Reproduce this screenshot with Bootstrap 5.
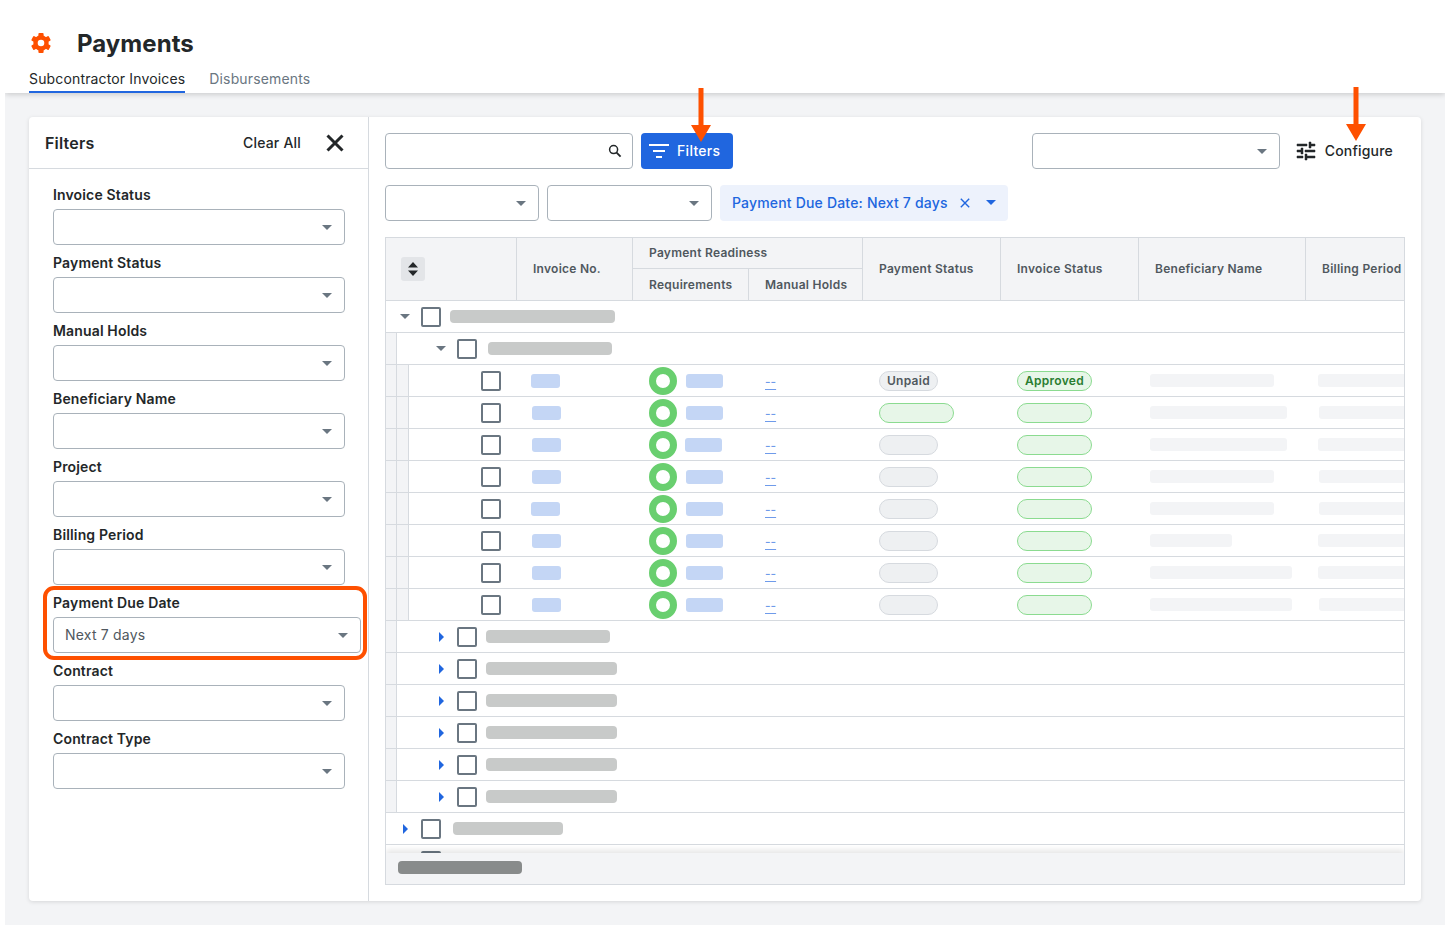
<!DOCTYPE html>
<html lang="en">
<head>
<meta charset="utf-8">
<title>Payments</title>
<link href="https://cdn.jsdelivr.net/npm/bootstrap@5.3.0/dist/css/bootstrap.min.css" rel="stylesheet">
<style>
:root{--ink:#232729;--line:#d6dadf;--orange:#fe5000;--blue:#2066df;--shell:#f3f4f6}
html,body{height:930px;overflow:hidden}
body{background:#fff;font-family:Inter,"Liberation Sans",sans-serif;color:var(--ink);font-size:14px;position:relative}
.shell{margin:0 5px;height:925px;background:var(--shell);display:flex;flex-direction:column;overflow:hidden}
.page-head{height:93px;background:#fff;box-shadow:0 1px 6px rgba(0,0,0,.2);padding:0 24px;position:relative;flex:none}
.title-row{height:69px;padding-top:27px;gap:24px}
.page-title{font-size:24px;font-weight:700;line-height:34px;margin:0;color:var(--ink);letter-spacing:.05px}
.gear{width:24px;height:24px;color:var(--orange);flex:none}
.tab-row{gap:24px;height:24px}
.tab-item{font-size:14px;line-height:20px;letter-spacing:.15px;color:#6a7681;text-decoration:none;height:24px}
.tab-item.on{color:var(--ink);border-bottom:2px solid var(--blue)}
.main-wrap{padding:24px;flex:1;min-height:0}
.work-card{height:784px;border:0;border-radius:4px;box-shadow:0 1px 4px rgba(0,0,0,.12);background:#fff;display:flex;flex-direction:row;overflow:hidden}
.filter-pane{width:340px;flex:none;border-right:1px solid var(--line)}
.filter-top{height:52px;border-bottom:1px solid var(--line);padding:0 23px 0 16px}
.filter-name{font-size:16px;font-weight:600;letter-spacing:.2px}
.clear-all{font-size:14px;font-weight:500;letter-spacing:.2px;color:var(--ink);margin-right:24px}
.close-x{width:20px;height:20px;display:block}
.filter-body{padding:14px 23px 0 24px}
.field-box{height:68px;position:relative}
.field-label{font-size:14px;font-weight:600;line-height:24px;height:26px;margin:0;letter-spacing:.15px;color:var(--ink);display:block}
.sel-box.form-select{height:36px;min-height:36px;border:1px solid #a9b2ba;border-radius:4px;font-size:14px;letter-spacing:.2px;color:#50585e;padding:0 30px 2px 11px;font-family:inherit;background-size:10px 5px;background-position:right 12px center;background-image:url("data:image/svg+xml,%3csvg xmlns='http://www.w3.org/2000/svg' viewBox='0 0 10 5'%3e%3cpath fill='%236a7681' d='M0 0h10L5 5z'/%3e%3c/svg%3e")}
.due-field .sel-box.form-select{width:308px;max-width:none}
.due-ring{position:absolute;left:-10px;top:-5px;width:324px;height:74px;border:4px solid var(--orange);border-radius:11px;pointer-events:none}
.grid-pane{flex:1;min-width:0;padding:16px;display:flex;flex-direction:column}
.tool-one{gap:8px;height:36px;margin-bottom:16px}
.tool-two{gap:8px;height:36px;margin-bottom:16px}
.search-box{width:248px;height:36px;position:relative;flex:none}
.search-box .form-control{height:36px;border:1px solid #a9b2ba;border-radius:4px}
.search-ico{position:absolute;right:11px;top:11px;width:14px;height:14px}
.filter-btn.btn{width:92px;height:36px;background:var(--blue);border:0;border-radius:4px;font-size:14px;font-weight:500;letter-spacing:.3px;color:#fff;padding:0 0 1px 8px;gap:8px;display:flex;align-items:center;justify-content:flex-start}
.w-a{width:248px;flex:none;margin-left:auto}
.w-b{width:154px;flex:none}
.w-c{width:165px;flex:none}
.config-btn{margin-left:6px;margin-right:12px;gap:7px;font-weight:500;font-size:14px;letter-spacing:.2px;color:var(--ink);padding-bottom:1px}
.filter-chip{height:36px;width:288px;background:#edf2fc;border-radius:4px;color:var(--blue);font-weight:500;font-size:14px;letter-spacing:.18px;padding:0 12px 1px;gap:12px;flex:none;white-space:nowrap}
.grid-frame{height:648px;border:1px solid var(--line);display:flex;flex-direction:column;overflow:hidden;flex:none}
.grid-scroll{flex:1;min-height:0;overflow:hidden}
.pay-table.table{width:1140px;table-layout:fixed;border-collapse:separate;border-spacing:0;margin:0}
.pay-table.table>:not(caption)>*>*{padding:0;border-bottom:1px solid var(--line);border-right:0;background:#fff;box-shadow:none;height:32px;vertical-align:middle;color:var(--ink)}
.pay-table.table>thead>*>*{background:var(--shell);font-size:12px;font-weight:600;letter-spacing:.26px;color:#50585e;border-right:1px solid var(--line);padding-left:16px;height:32px;white-space:nowrap}
.pay-table.table>thead>tr:first-child>*{height:31px}
.pay-table.table>thead>*>*.sort-head{padding-left:15px}
.sort-chip{width:24px;height:24px;background:#e3e5e8;border-radius:3px;display:flex;align-items:center;justify-content:center}
.tree-cell{height:31px;display:flex;align-items:center}
.strip{width:11px;height:31px;flex:none;background:var(--shell);border-right:1px solid var(--line)}
.strip.two{width:12px}
.tw{display:flex;align-items:center;flex:none}
.tick{width:20px;height:20px;border:2px solid #6a7681;border-radius:2px;flex:none;background:#fff}
.gbar{height:13px;background:#c8cac9;border-radius:4px;flex:none}
.ibar{height:14px;background:#c4d6f5;border-radius:3px;display:block}
.ring{width:28px;height:28px;border:7px solid #69cf6f;border-radius:50%;flex:none}
.flex-mid{display:flex;align-items:center;height:31px}
.dash-link{color:#6f9bea;font-size:12px;line-height:14px;text-decoration:underline;text-decoration-thickness:1px;text-underline-offset:3px;font-weight:500;display:block;white-space:nowrap;margin-top:2px}
.pill{height:20px;border-radius:10px;border:1px solid;font-size:12px;font-weight:600;letter-spacing:.3px;line-height:18px;display:block;text-align:center;padding:0}
.pill.grey{width:59px;background:#eef0f2;border-color:#d6dadf;color:#50585e}
.pill.green{width:75px;background:#e7f6e8;border-color:#8bdb90;color:#2a7d31}
.soft{height:13px;background:var(--shell);border-radius:3px;display:block}
.scroll-foot{height:31px;flex:none;background:var(--shell);position:relative;box-shadow:0 -3px 6px rgba(0,0,0,.1);padding:8px 12px}
.scroll-thumb{width:124px;height:13px;background:#888b8b;border-radius:4px}
.note-arrow{position:absolute;width:20px;height:54px;color:var(--orange)}
.arrow-a{left:691px;top:88px}
.arrow-b{left:1346px;top:87px}
</style>
</head>
<body>
<div class="shell">
  <header class="page-head">
    <div class="title-row d-flex align-items-start">
      <svg class="gear mt-1" viewBox="0 0 24 24" aria-hidden="true"><g fill="currentColor"><rect x="9.4" y="2" width="5.2" height="5" rx="1"/><rect x="9.4" y="2" width="5.2" height="5" rx="1" transform="rotate(60 12 12)"/><rect x="9.4" y="2" width="5.2" height="5" rx="1" transform="rotate(120 12 12)"/><rect x="9.4" y="2" width="5.2" height="5" rx="1" transform="rotate(180 12 12)"/><rect x="9.4" y="2" width="5.2" height="5" rx="1" transform="rotate(240 12 12)"/><rect x="9.4" y="2" width="5.2" height="5" rx="1" transform="rotate(300 12 12)"/></g><circle cx="12" cy="12" r="5.5" fill="none" stroke="currentColor" stroke-width="4.4"/></svg>
      <h1 class="page-title">Payments</h1>
    </div>
    <nav class="tab-row d-flex">
      <a class="tab-item on" href="#">Subcontractor Invoices</a>
      <a class="tab-item" href="#">Disbursements</a>
    </nav>
  </header>
  <main class="main-wrap">
    <div class="card work-card">
      <aside class="filter-pane">
        <div class="filter-top d-flex align-items-center">
          <span class="filter-name me-auto">Filters</span>
          <span class="clear-all">Clear All</span>
          <svg class="close-x" viewBox="0 0 20 20" aria-hidden="true"><path d="M2.5 2.5l15 15M17.5 2.5l-15 15" stroke="#232729" stroke-width="3" fill="none"/></svg>
        </div>
        <div class="filter-body">
          <div class="field-box"><label class="field-label">Invoice Status</label><select class="form-select sel-box"><option></option></select></div>
          <div class="field-box"><label class="field-label">Payment Status</label><select class="form-select sel-box"><option></option></select></div>
          <div class="field-box"><label class="field-label">Manual Holds</label><select class="form-select sel-box"><option></option></select></div>
          <div class="field-box"><label class="field-label">Beneficiary Name</label><select class="form-select sel-box"><option></option></select></div>
          <div class="field-box"><label class="field-label">Project</label><select class="form-select sel-box"><option></option></select></div>
          <div class="field-box"><label class="field-label">Billing Period</label><select class="form-select sel-box"><option></option></select></div>
          <div class="field-box due-field"><label class="field-label">Payment Due Date</label><select class="form-select sel-box"><option>Next 7 days</option></select><div class="due-ring"></div></div>
          <div class="field-box"><label class="field-label">Contract</label><select class="form-select sel-box"><option></option></select></div>
          <div class="field-box"><label class="field-label">Contract Type</label><select class="form-select sel-box"><option></option></select></div>
        </div>
      </aside>
      <section class="grid-pane">
        <div class="tool-one d-flex align-items-center">
          <div class="search-box">
            <input class="form-control" type="text" aria-label="Search">
            <svg class="search-ico" viewBox="0 0 14 14" aria-hidden="true"><circle cx="5.6" cy="5.6" r="4" fill="none" stroke="#232729" stroke-width="1.5"/><path d="M8.6 8.6l4 4" stroke="#232729" stroke-width="1.8"/></svg>
          </div>
          <button class="btn filter-btn" type="button">
            <svg width="20" height="14" viewBox="0 0 20 14" aria-hidden="true"><path d="M0 0h20v2H0zM4 6h12v2H4zM7 12h6v2H7z" fill="#fff"/></svg>
            <span>Filters</span>
          </button>
          <select class="form-select sel-box w-a" aria-label="View"><option></option></select>
          <div class="config-btn d-flex align-items-center">
            <svg width="24" height="24" viewBox="0 0 24 24" aria-hidden="true"><path fill="#232729" stroke="#232729" stroke-width=".5" d="M3 17v2h6v-2H3zM3 5v2h10V5H3zm10 16v-2h8v-2h-8v-2h-2v6h2zM7 9v2H3v2h4v2h2V9H7zm14 4v-2H11v2h10zm-6-4h2V7h4V5h-4V3h-2v6z"/></svg>
            <span>Configure</span>
          </div>
        </div>
        <div class="tool-two d-flex align-items-center">
          <select class="form-select sel-box w-b" aria-label="Filter one"><option></option></select>
          <select class="form-select sel-box w-c" aria-label="Filter two"><option></option></select>
          <div class="filter-chip d-flex align-items-center">
            <span>Payment Due Date: Next 7 days</span>
            <svg width="10" height="10" viewBox="0 0 10 10" aria-hidden="true"><path d="M.8.8l8.4 8.4M9.2.8L.8 9.2" stroke="#2066df" stroke-width="1.4"/></svg>
            <svg class="ms-1" width="10" height="5" viewBox="0 0 10 5" aria-hidden="true"><path d="M0 0h10L5 5z" fill="#2066df"/></svg>
          </div>
        </div>
        <div class="grid-frame">
          <div class="grid-scroll">
            <table class="table pay-table">
              <colgroup><col style="width:131px"><col style="width:116px"><col style="width:116px"><col style="width:114px"><col style="width:138px"><col style="width:138px"><col style="width:167px"><col style="width:220px"></colgroup>
              <thead>
                <tr>
                  <th rowspan="2" class="sort-head"><div class="sort-chip"><svg width="10" height="14" viewBox="0 0 10 14" aria-hidden="true"><path d="M5 0l5 5.5H0zM5 14L0 8.5h10z" fill="#232729"/></svg></div></th>
                  <th rowspan="2">Invoice No.</th>
                  <th colspan="2">Payment Readiness</th>
                  <th rowspan="2">Payment Status</th>
                  <th rowspan="2">Invoice Status</th>
                  <th rowspan="2">Beneficiary Name</th>
                  <th rowspan="2">Billing Period</th>
                </tr>
                <tr><th>Requirements</th><th>Manual Holds</th></tr>
              </thead>
              <tbody>
                <tr><td colspan="8"><div class="tree-cell"><span class="tw" style="margin-left:14px;width:21px"><svg width="10" height="5" viewBox="0 0 10 5"><path d="M0 0h10L5 5z" fill="#6a7681"/></svg></span><span class="tick"></span><span class="gbar" style="margin-left:9px;width:165px"></span></div></td></tr>
                <tr><td colspan="8"><div class="tree-cell"><span class="strip"></span><span class="tw" style="margin-left:39px;width:21px"><svg width="10" height="5" viewBox="0 0 10 5"><path d="M0 0h10L5 5z" fill="#6a7681"/></svg></span><span class="tick"></span><span class="gbar" style="margin-left:11px;width:124px"></span></div></td></tr>

                <tr><td><div class="tree-cell"><span class="strip"></span><span class="strip two"></span><span class="tick" style="margin-left:72px"></span></div></td><td><div class="flex-mid"><span class="ibar" style="margin-left:14px;width:29px"></span></div></td><td><div class="flex-mid"><span class="ring" style="margin-left:16px"></span><span class="ibar" style="margin-left:9px;width:37px"></span></div></td><td><div class="flex-mid"><a class="dash-link" style="margin-left:16px" href="#">--</a></div></td><td><div class="flex-mid"><span class="pill grey" style="margin-left:16px">Unpaid</span></div></td><td><div class="flex-mid"><span class="pill green" style="margin-left:16px">Approved</span></div></td><td><div class="flex-mid"><span class="soft" style="margin-left:11px;width:124px"></span></div></td><td><div class="flex-mid"><span class="soft" style="margin-left:12px;width:130px"></span></div></td></tr>

                <tr><td><div class="tree-cell"><span class="strip"></span><span class="strip two"></span><span class="tick" style="margin-left:72px"></span></div></td><td><div class="flex-mid"><span class="ibar" style="margin-left:15px;width:29px"></span></div></td><td><div class="flex-mid"><span class="ring" style="margin-left:16px"></span><span class="ibar" style="margin-left:9px;width:37px"></span></div></td><td><div class="flex-mid"><a class="dash-link" style="margin-left:16px" href="#">--</a></div></td><td><div class="flex-mid"><span class="pill green" style="margin-left:16px"></span></div></td><td><div class="flex-mid"><span class="pill green" style="margin-left:16px"></span></div></td><td><div class="flex-mid"><span class="soft" style="margin-left:11px;width:137px"></span></div></td><td><div class="flex-mid"><span class="soft" style="margin-left:13px;width:130px"></span></div></td></tr>

                <tr><td><div class="tree-cell"><span class="strip"></span><span class="strip two"></span><span class="tick" style="margin-left:72px"></span></div></td><td><div class="flex-mid"><span class="ibar" style="margin-left:15px;width:29px"></span></div></td><td><div class="flex-mid"><span class="ring" style="margin-left:16px"></span><span class="ibar" style="margin-left:8px;width:37px"></span></div></td><td><div class="flex-mid"><a class="dash-link" style="margin-left:16px" href="#">--</a></div></td><td><div class="flex-mid"><span class="pill grey" style="margin-left:16px"></span></div></td><td><div class="flex-mid"><span class="pill green" style="margin-left:16px"></span></div></td><td><div class="flex-mid"><span class="soft" style="margin-left:11px;width:137px"></span></div></td><td><div class="flex-mid"><span class="soft" style="margin-left:12px;width:130px"></span></div></td></tr>

                <tr><td><div class="tree-cell"><span class="strip"></span><span class="strip two"></span><span class="tick" style="margin-left:72px"></span></div></td><td><div class="flex-mid"><span class="ibar" style="margin-left:15px;width:29px"></span></div></td><td><div class="flex-mid"><span class="ring" style="margin-left:16px"></span><span class="ibar" style="margin-left:9px;width:37px"></span></div></td><td><div class="flex-mid"><a class="dash-link" style="margin-left:16px" href="#">--</a></div></td><td><div class="flex-mid"><span class="pill grey" style="margin-left:16px"></span></div></td><td><div class="flex-mid"><span class="pill green" style="margin-left:16px"></span></div></td><td><div class="flex-mid"><span class="soft" style="margin-left:11px;width:124px"></span></div></td><td><div class="flex-mid"><span class="soft" style="margin-left:13px;width:130px"></span></div></td></tr>

                <tr><td><div class="tree-cell"><span class="strip"></span><span class="strip two"></span><span class="tick" style="margin-left:72px"></span></div></td><td><div class="flex-mid"><span class="ibar" style="margin-left:14px;width:29px"></span></div></td><td><div class="flex-mid"><span class="ring" style="margin-left:16px"></span><span class="ibar" style="margin-left:9px;width:37px"></span></div></td><td><div class="flex-mid"><a class="dash-link" style="margin-left:16px" href="#">--</a></div></td><td><div class="flex-mid"><span class="pill grey" style="margin-left:16px"></span></div></td><td><div class="flex-mid"><span class="pill green" style="margin-left:16px"></span></div></td><td><div class="flex-mid"><span class="soft" style="margin-left:11px;width:124px"></span></div></td><td><div class="flex-mid"><span class="soft" style="margin-left:13px;width:130px"></span></div></td></tr>

                <tr><td><div class="tree-cell"><span class="strip"></span><span class="strip two"></span><span class="tick" style="margin-left:72px"></span></div></td><td><div class="flex-mid"><span class="ibar" style="margin-left:15px;width:29px"></span></div></td><td><div class="flex-mid"><span class="ring" style="margin-left:16px"></span><span class="ibar" style="margin-left:9px;width:37px"></span></div></td><td><div class="flex-mid"><a class="dash-link" style="margin-left:16px" href="#">--</a></div></td><td><div class="flex-mid"><span class="pill grey" style="margin-left:16px"></span></div></td><td><div class="flex-mid"><span class="pill green" style="margin-left:16px"></span></div></td><td><div class="flex-mid"><span class="soft" style="margin-left:11px;width:82px"></span></div></td><td><div class="flex-mid"><span class="soft" style="margin-left:12px;width:130px"></span></div></td></tr>

                <tr><td><div class="tree-cell"><span class="strip"></span><span class="strip two"></span><span class="tick" style="margin-left:72px"></span></div></td><td><div class="flex-mid"><span class="ibar" style="margin-left:15px;width:29px"></span></div></td><td><div class="flex-mid"><span class="ring" style="margin-left:16px"></span><span class="ibar" style="margin-left:9px;width:37px"></span></div></td><td><div class="flex-mid"><a class="dash-link" style="margin-left:16px" href="#">--</a></div></td><td><div class="flex-mid"><span class="pill grey" style="margin-left:16px"></span></div></td><td><div class="flex-mid"><span class="pill green" style="margin-left:16px"></span></div></td><td><div class="flex-mid"><span class="soft" style="margin-left:11px;width:142px"></span></div></td><td><div class="flex-mid"><span class="soft" style="margin-left:12px;width:130px"></span></div></td></tr>

                <tr><td><div class="tree-cell"><span class="strip"></span><span class="strip two"></span><span class="tick" style="margin-left:72px"></span></div></td><td><div class="flex-mid"><span class="ibar" style="margin-left:15px;width:29px"></span></div></td><td><div class="flex-mid"><span class="ring" style="margin-left:16px"></span><span class="ibar" style="margin-left:9px;width:37px"></span></div></td><td><div class="flex-mid"><a class="dash-link" style="margin-left:16px" href="#">--</a></div></td><td><div class="flex-mid"><span class="pill grey" style="margin-left:16px"></span></div></td><td><div class="flex-mid"><span class="pill green" style="margin-left:16px"></span></div></td><td><div class="flex-mid"><span class="soft" style="margin-left:11px;width:142px"></span></div></td><td><div class="flex-mid"><span class="soft" style="margin-left:13px;width:130px"></span></div></td></tr>

                <tr><td colspan="8"><div class="tree-cell"><span class="strip"></span><span class="tw" style="margin-left:42px;width:18px"><svg width="5" height="10" viewBox="0 0 5 10"><path d="M0 0l5 5-5 5z" fill="#2066df"/></svg></span><span class="tick"></span><span class="gbar" style="margin-left:9px;width:124px"></span></div></td></tr>
                <tr><td colspan="8"><div class="tree-cell"><span class="strip"></span><span class="tw" style="margin-left:42px;width:18px"><svg width="5" height="10" viewBox="0 0 5 10"><path d="M0 0l5 5-5 5z" fill="#2066df"/></svg></span><span class="tick"></span><span class="gbar" style="margin-left:9px;width:131px"></span></div></td></tr>
                <tr><td colspan="8"><div class="tree-cell"><span class="strip"></span><span class="tw" style="margin-left:42px;width:18px"><svg width="5" height="10" viewBox="0 0 5 10"><path d="M0 0l5 5-5 5z" fill="#2066df"/></svg></span><span class="tick"></span><span class="gbar" style="margin-left:9px;width:131px"></span></div></td></tr>
                <tr><td colspan="8"><div class="tree-cell"><span class="strip"></span><span class="tw" style="margin-left:42px;width:18px"><svg width="5" height="10" viewBox="0 0 5 10"><path d="M0 0l5 5-5 5z" fill="#2066df"/></svg></span><span class="tick"></span><span class="gbar" style="margin-left:9px;width:131px"></span></div></td></tr>
                <tr><td colspan="8"><div class="tree-cell"><span class="strip"></span><span class="tw" style="margin-left:42px;width:18px"><svg width="5" height="10" viewBox="0 0 5 10"><path d="M0 0l5 5-5 5z" fill="#2066df"/></svg></span><span class="tick"></span><span class="gbar" style="margin-left:9px;width:131px"></span></div></td></tr>
                <tr><td colspan="8"><div class="tree-cell"><span class="strip"></span><span class="tw" style="margin-left:42px;width:18px"><svg width="5" height="10" viewBox="0 0 5 10"><path d="M0 0l5 5-5 5z" fill="#2066df"/></svg></span><span class="tick"></span><span class="gbar" style="margin-left:9px;width:131px"></span></div></td></tr>
                <tr><td colspan="8"><div class="tree-cell"><span class="tw" style="margin-left:17px;width:18px"><svg width="5" height="10" viewBox="0 0 5 10"><path d="M0 0l5 5-5 5z" fill="#2066df"/></svg></span><span class="tick"></span><span class="gbar" style="margin-left:12px;width:110px"></span></div></td></tr>
                <tr><td colspan="8"><div class="tree-cell"><span class="tw" style="margin-left:17px;width:18px"></span><span class="tick"></span></div></td></tr>
              </tbody>
            </table>
          </div>
          <div class="scroll-foot"><div class="scroll-thumb"></div></div>
        </div>
      </section>
    </div>
  </main>
</div>
<svg class="note-arrow arrow-a" viewBox="0 0 20 54" aria-hidden="true"><path d="M7.5 0h5v37H20L10 54 0 37h7.5z" fill="currentColor"/></svg>
<svg class="note-arrow arrow-b" viewBox="0 0 20 54" aria-hidden="true"><path d="M7.5 0h5v37H20L10 54 0 37h7.5z" fill="currentColor"/></svg>
</body>
</html>
